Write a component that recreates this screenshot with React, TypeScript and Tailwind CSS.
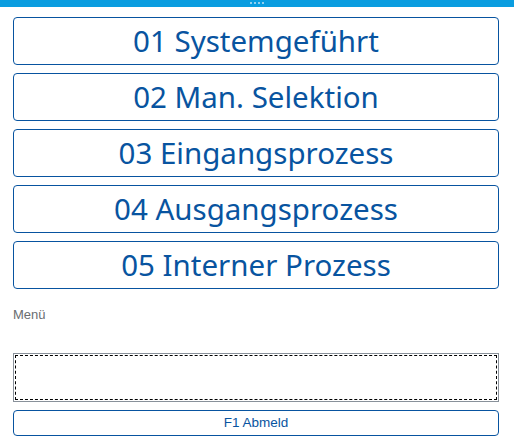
const items = [
  "01 Systemgeführt",
  "02 Man. Selektion",
  "03 Eingangsprozess",
  "04 Ausgangsprozess",
  "05 Interner Prozess",
];

export default function App() {
  return (
    <div className="w-[514px] h-[443px] bg-white font-['Liberation_Sans',sans-serif] overflow-hidden">
      {/* top bar with drag handle */}
      <div className="h-[7px] bg-[#0a9de0] flex items-start justify-center pt-[2px] gap-[2px]">
        <span className="w-[2px] h-[2px] bg-[#8fd0f0]" />
        <span className="w-[2px] h-[2px] bg-[#8fd0f0]" />
        <span className="w-[2px] h-[2px] bg-[#8fd0f0]" />
        <span className="w-[2px] h-[2px] bg-[#8fd0f0]" />
      </div>

      <div className="pl-[13px] pr-[15px] pt-[10px] flex flex-col">
        <div className="flex flex-col gap-[8px]">
          {items.map((label) => (
            <button
              key={label}
              className="h-[48px] w-full border border-[#0854a0] rounded-[4px] text-[#0854a0] text-[29.5px] leading-none font-['Noto_Sans',sans-serif] flex items-center justify-center"
            >
              {label}
            </button>
          ))}
        </div>

        <div className="mt-[18px] text-[13px] text-[#6a6d70] leading-[16px]">Menü</div>

        <div className="mt-[30px] h-[49px] border border-[#89919a] p-[1px]">
          <div className="h-full w-full border border-dashed border-black" />
        </div>

        <button className="mt-[8px] h-[26px] w-full border border-[#0854a0] rounded-[4px] text-[#0854a0] text-[13.5px] leading-none flex items-center justify-center">
          F1 Abmeld
        </button>
      </div>
    </div>
  );
}
